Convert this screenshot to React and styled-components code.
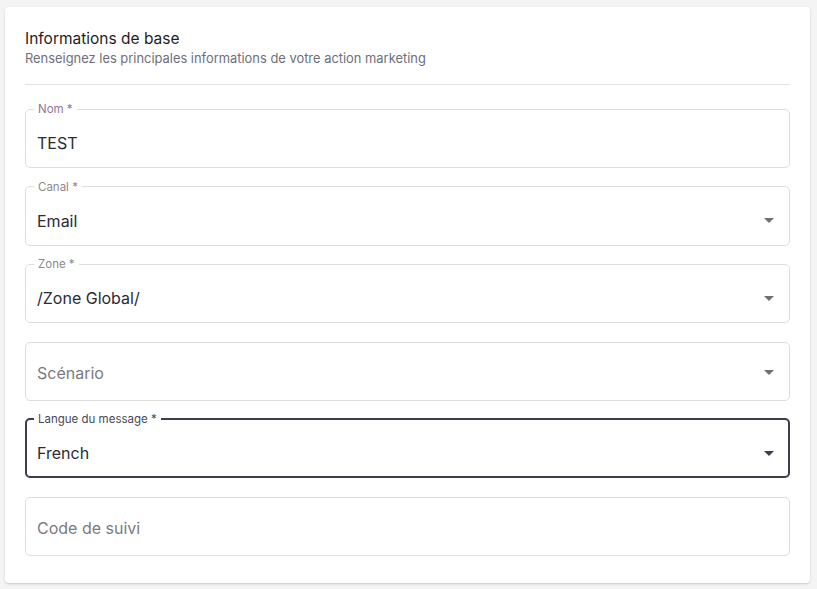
import React from "react";
import styled, { createGlobalStyle } from "styled-components";

const Global = createGlobalStyle`
  html, body { margin: 0; padding: 0; background: #f4f4f4; }
  body { font-family: Inter, "Noto Sans", Arial, sans-serif; }
`;

const Page = styled.div`
  padding: 7px 7px 7px 5px;
`;

const Card = styled.section`
  background: #fff;
  border-radius: 4px;
  box-shadow: 0 1px 3px rgba(0, 0, 0, 0.12), 0 1px 1px rgba(0, 0, 0, 0.06);
  padding: 22px 20px 27px;
`;

const Header = styled.header`
  display: flex;
  flex-direction: column;
  gap: 1px;
  padding-bottom: 17px;
  border-bottom: 1px solid #e2e2e2;
  margin-bottom: 24px;
`;

const Title = styled.h2`
  margin: 0;
  font-size: 15.5px;
  line-height: 20px;
  font-weight: 400;
  color: #1e1e24;
`;

const Subtitle = styled.p`
  margin: 0;
  font-size: 12.9px;
  line-height: 17px;
  color: #6f6f7a;
`;

const Fields = styled.div`
  display: flex;
  flex-direction: column;
  gap: 18.5px;
`;

const FieldBox = styled.div`
  position: relative;
  height: 59px;
  display: flex;
  align-items: center;
  padding: ${(p) => (p.$hasLabel ? "9px" : "3px")} 20px 0 12px;
  box-sizing: border-box;
`;

const Outline = styled.fieldset`
  position: absolute;
  inset: ${(p) => (p.$hasLabel ? "-6px" : "0")} 0 0 0;
  margin: 0;
  padding: 0 8px;
  border: ${(p) => (p.$focused ? "2px solid #3b3d4c" : "1px solid #dedede")};
  border-radius: 5px;
  pointer-events: none;
`;

const Legend = styled.legend`
  padding: 0 4px;
  font-size: 11.5px;
  line-height: 12px;
  color: ${(p) => p.$color};
  margin-left: ${(p) => (p.$focused ? "-1px" : "0")};
`;

const Value = styled.span`
  flex: 1;
  font-size: 16px;
  color: ${(p) => (p.$placeholder ? "#7b7b80" : "#2a2b33")};
`;

const Arrow = styled.svg`
  width: 10px;
  height: 5px;
  flex: none;
  margin-right: -4px;
`;

function Field({ label, value, placeholder, select, focused, labelColor }) {
  const hasLabel = Boolean(label);
  return (
    <FieldBox $hasLabel={hasLabel}>
      <Value $placeholder={!value}>{value || placeholder}</Value>
      {select && (
        <Arrow viewBox="0 0 10 5">
          <path d="M0 0 L10 0 L5 5 Z" fill={focused ? "#3b3d4c" : "#707070"} />
        </Arrow>
      )}
      <Outline $hasLabel={hasLabel} $focused={focused}>
        {hasLabel && (
          <Legend $focused={focused} $color={labelColor}>
            {label}
          </Legend>
        )}
      </Outline>
    </FieldBox>
  );
}

export default function App() {
  return (
    <>
      <Global />
      <Page>
        <Card>
          <Header>
            <Title>Informations de base</Title>
            <Subtitle>Renseignez les principales informations de votre action marketing</Subtitle>
          </Header>
          <Fields>
            <Field label="Nom *" value="TEST" labelColor="#957499" />
            <Field label="Canal *" value="Email" select labelColor="#8a8a8f" />
            <Field label="Zone *" value="/Zone Global/" select labelColor="#8a8a8f" />
            <Field placeholder="Scénario" select />
            <Field label="Langue du message *" value="French" select focused labelColor="#4a4858" />
            <Field placeholder="Code de suivi" />
          </Fields>
        </Card>
      </Page>
    </>
  );
}
